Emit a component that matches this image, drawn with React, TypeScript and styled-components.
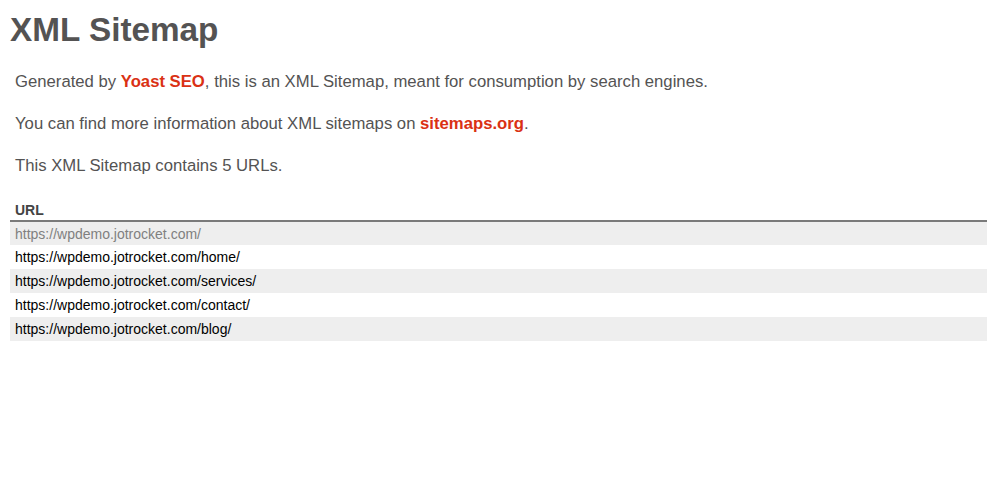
import React from 'react';
import styled, { createGlobalStyle } from 'styled-components';

const GlobalStyle = createGlobalStyle`
  html, body {
    margin: 0;
    padding: 0;
    background: #ffffff;
  }
  body {
    font-family: "Liberation Sans", Arial, Helvetica, sans-serif;
    font-size: 16.7px;
    color: #545353;
  }
`;

const Content = styled.div`
  padding: 11px 0 0 10px;
`;

const Title = styled.h1`
  margin: 0;
  font-size: 33.3px;
  line-height: 38px;
  font-weight: 700;
  color: #545353;
`;

const Explanation = styled.p`
  margin: 0 0 22px 5px;
  font-size: 16.7px;
  line-height: 20px;
  color: #545353;

  &:first-of-type {
    margin-top: 23px;
  }
`;

const ExplLink = styled.a`
  color: #da3114;
  font-weight: 700;
  text-decoration: none;
`;

const Sitemap = styled.table`
  width: 100%;
  margin-top: 3px;
  border: none;
  border-collapse: collapse;
`;

const HeadCell = styled.th`
  text-align: left;
  padding: 4px 30px 1.6px 5px;
  font-size: 14px;
  line-height: 16px;
  font-weight: 700;
  color: #444444;
  border-bottom: 2px solid #7a7a7a;
`;

const Row = styled.tr<{ $striped: boolean }>`
  background: ${(p) => (p.$striped ? '#eeeeee' : '#ffffff')};
`;

const Cell = styled.td`
  padding: 4px 5px 3.8px;
  font-size: 14px;
  line-height: 16px;
`;

const UrlLink = styled.a<{ $visited?: boolean }>`
  color: ${(p) => (p.$visited ? '#808080' : '#000000')};
  text-decoration: none;
`;

const urls = [
  'https://wpdemo.jotrocket.com/',
  'https://wpdemo.jotrocket.com/home/',
  'https://wpdemo.jotrocket.com/services/',
  'https://wpdemo.jotrocket.com/contact/',
  'https://wpdemo.jotrocket.com/blog/',
];

export default function App() {
  return (
    <>
      <GlobalStyle />
      <Content>
        <Title>XML Sitemap</Title>
        <Explanation>
          Generated by <ExplLink href="#">Yoast SEO</ExplLink>, this is an XML
          Sitemap, meant for consumption by search engines.
        </Explanation>
        <Explanation>
          You can find more information about XML sitemaps on{' '}
          <ExplLink href="#">sitemaps.org</ExplLink>.
        </Explanation>
        <Explanation>This XML Sitemap contains 5 URLs.</Explanation>
        <Sitemap>
          <thead>
            <tr>
              <HeadCell>URL</HeadCell>
            </tr>
          </thead>
          <tbody>
            {urls.map((url, i) => (
              <Row key={url} $striped={i % 2 === 0}>
                <Cell>
                  <UrlLink href="#" $visited={i === 0}>
                    {url}
                  </UrlLink>
                </Cell>
              </Row>
            ))}
          </tbody>
        </Sitemap>
      </Content>
    </>
  );
}
